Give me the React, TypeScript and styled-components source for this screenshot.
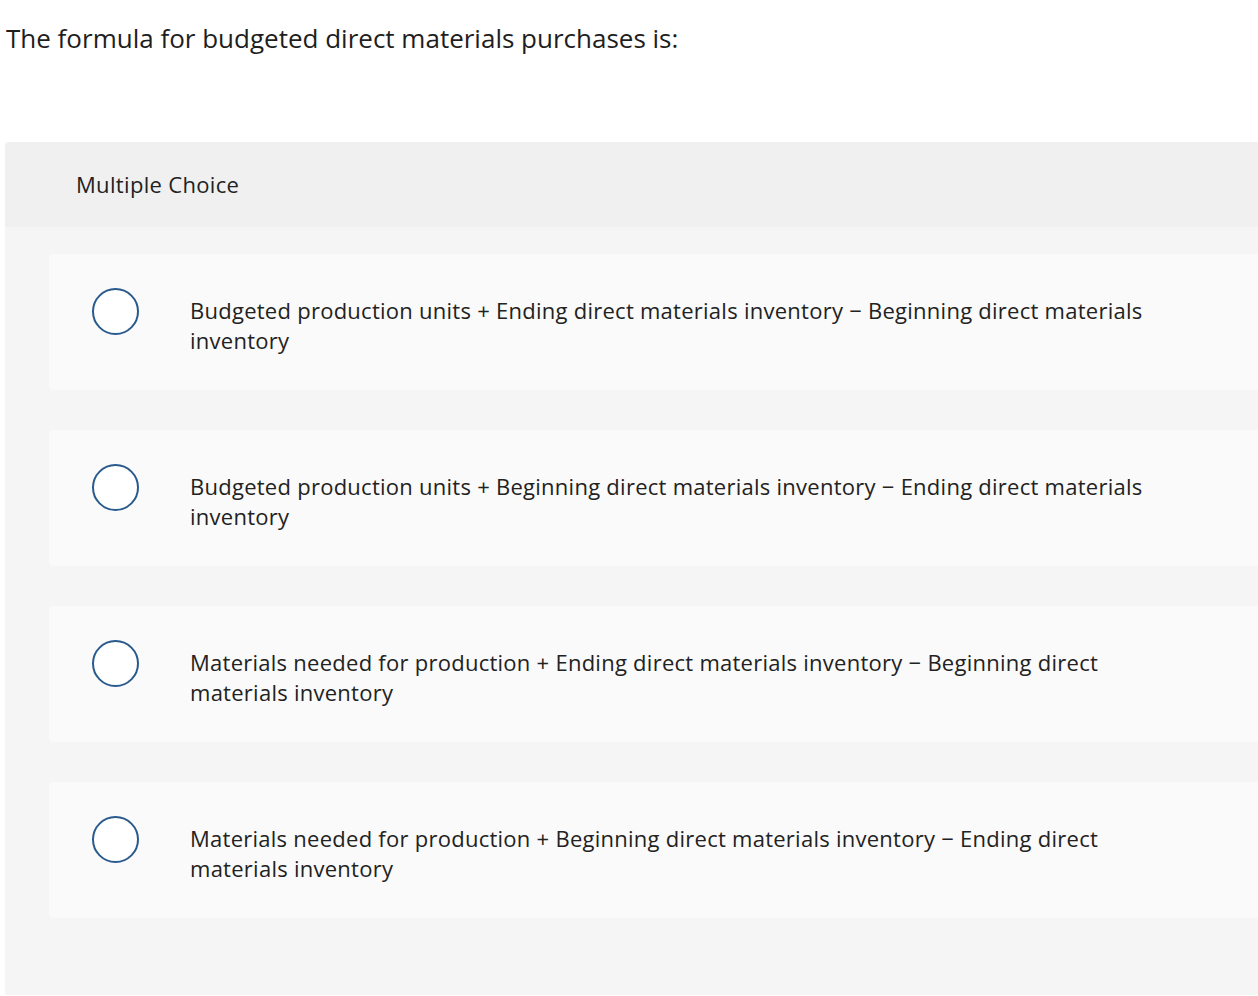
import React from "react";
import styled, { createGlobalStyle } from "styled-components";

const Global = createGlobalStyle`
  html, body { margin: 0; padding: 0; background: #ffffff; }
  body { font-family: "Open Sans", Lato, sans-serif; color: #222222; overflow: hidden; }
`;

const Page = styled.div`
  width: 1258px;
  height: 996px;
  overflow: hidden;
  padding-left: 5px;
  box-sizing: border-box;
`;

const Question = styled.p`
  margin: 0;
  padding: 20px 0 0 1px;
  height: 142px;
  box-sizing: border-box;
  font-size: 26px;
  line-height: 36px;
  color: #1e1e1e;
`;

const Panel = styled.section`
  width: 1300px;
  height: 853px;
  background: #f5f5f5;
  border-radius: 4px 0 0 0;
  display: flex;
  flex-direction: column;
`;

const Header = styled.div`
  height: 85px;
  background: #f0f0f0;
  border-radius: 4px 0 0 0;
  display: flex;
  align-items: center;
  padding: 0 0 2px 71px;
  box-sizing: border-box;
  font-size: 22px;
  letter-spacing: 0.33px;
  color: #222222;
`;

const Options = styled.div`
  display: flex;
  flex-direction: column;
  gap: 40px;
  padding: 27px 0 0 44px;
`;

const Card = styled.label`
  height: 136px;
  box-sizing: border-box;
  background: #fafafa;
  border-radius: 4px 0 0 4px;
  display: flex;
  align-items: flex-start;
  padding: 34px 0 0 43px;
  cursor: pointer;
`;

const Radio = styled.span`
  flex: 0 0 auto;
  width: 47px;
  height: 47px;
  box-sizing: border-box;
  border: 2px solid #2a5a8c;
  border-radius: 50%;
  background: #ffffff;
`;

const OptionText = styled.span`
  margin: 7px 0 0 51px;
  width: 980px;
  font-size: 22px;
  letter-spacing: 0.26px;
  line-height: 30px;
  color: #222222;
`;

const choices = [
  "Budgeted production units + Ending direct materials inventory \u2212 Beginning direct materials inventory",
  "Budgeted production units + Beginning direct materials inventory \u2212 Ending direct materials inventory",
  "Materials needed for production + Ending direct materials inventory \u2212 Beginning direct materials inventory",
  "Materials needed for production + Beginning direct materials inventory \u2212 Ending direct materials inventory",
];

export default function App() {
  return (
    <>
      <Global />
      <Page>
        <Question>The formula for budgeted direct materials purchases is:</Question>
        <Panel>
          <Header>Multiple Choice</Header>
          <Options>
            {choices.map((c) => (
              <Card key={c}>
                <Radio />
                <OptionText>{c}</OptionText>
              </Card>
            ))}
          </Options>
        </Panel>
      </Page>
    </>
  );
}
